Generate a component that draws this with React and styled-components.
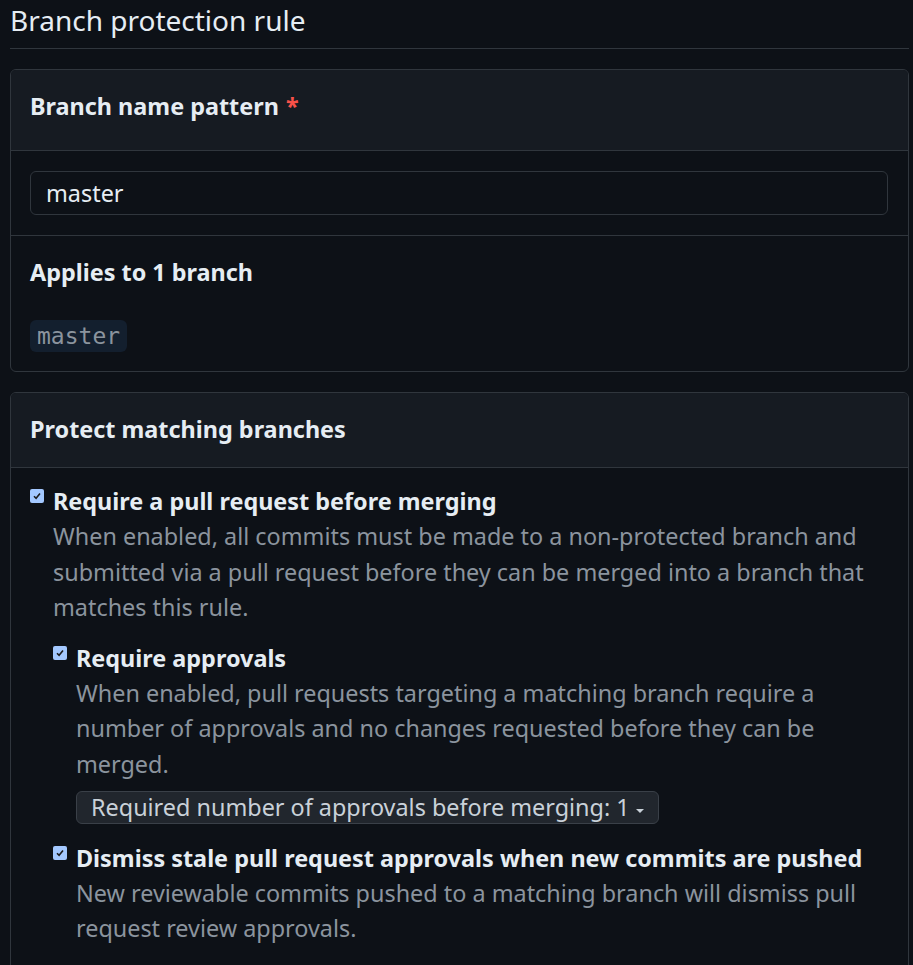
import React from "react";
import styled, { createGlobalStyle } from "styled-components";

const Global = createGlobalStyle`
  html, body { margin: 0; padding: 0; background: #0d1117; }
  body { font-family: "Noto Sans", "Open Sans", sans-serif; color: #e6edf3; }
  * { box-sizing: border-box; }
`;

const FS = "23.4px";

const Page = styled.div`
  padding: 2px 4px 0 10px;
  display: flex;
  flex-direction: column;
  gap: 20px;
`;

const Subhead = styled.div`
  border-bottom: 1px solid #30363d;
  padding-bottom: 10px;
`;

const Title = styled.h2`
  margin: 0;
  font-size: 28px;
  line-height: 36px;
  font-weight: 400;
  color: #e6edf3;
`;

const Box = styled.section`
  border: 1px solid #30363d;
  border-radius: 6px;
  background: #0d1117;
  overflow: hidden;
`;

const BoxHeader = styled.div`
  background: #161b22;
  padding: ${(p) => p.$pad || 19}px 20px ${(p) => p.$padBottom || 19}px 19px;
  border-bottom: 1px solid #30363d;
`;

const BoxTitle = styled.h3`
  margin: 0;
  font-size: ${FS};
  line-height: 36px;
  font-weight: 700;
  color: #e6edf3;
`;

const Required = styled.span`
  color: #f85149;
  margin-left: 7px;
`;

const Row = styled.div`
  padding: ${(p) => p.$top}px 20px ${(p) => p.$bottom}px 19px;
  border-top: ${(p) => (p.$divided ? "1px solid #30363d" : "none")};
`;

const TextInput = styled.div`
  height: 44px;
  border: 1px solid #30363d;
  border-radius: 6px;
  background: #0d1117;
  padding: 0 15px;
  display: flex;
  align-items: center;
  font-size: ${FS};
  color: #e6edf3;
`;

const SubTitle = styled.h4`
  margin: 0;
  font-size: ${FS};
  line-height: 36px;
  font-weight: 700;
  color: #e6edf3;
`;

const Chip = styled.code`
  display: inline-flex;
  align-items: center;
  margin-top: 30px;
  height: 32px;
  padding: 0 7px;
  border-radius: 6px;
  background: #131f2e;
  color: #8b949e;
  font-family: "DejaVu Sans Mono", "Liberation Mono", monospace;
  font-size: 23px;
`;

const Options = styled.div`
  padding: 16px 20px 60px 19px;
`;

const Option = styled.div`
  display: grid;
  grid-template-columns: 14px 1fr;
  column-gap: 9px;
  margin-top: ${(p) => p.$mt || 0}px;
`;

const Check = styled.span`
  width: 14px;
  height: 14px;
  margin-top: 5px;
  border-radius: 2px;
  background: #a3c8ff;
  display: flex;
  align-items: center;
  justify-content: center;
`;

const OptionBody = styled.div`
  display: flex;
  flex-direction: column;
`;

const Label = styled.div`
  font-size: ${FS};
  line-height: 35px;
  font-weight: 700;
  color: #e6edf3;
`;

const Note = styled.p`
  margin: 0;
  font-size: ${FS};
  line-height: 35.6px;
  color: #8b949e;
`;

const Nested = styled.div`
  display: flex;
  flex-direction: column;
`;

const SelectButton = styled.button`
  align-self: flex-start;
  margin-top: 8px;
  height: 33px;
  padding: 0 14px;
  border: 1px solid #3a4048;
  border-radius: 6px;
  background: #21262d;
  color: #c9d1d9;
  font-family: inherit;
  font-size: ${FS};
  display: inline-flex;
  align-items: center;
  gap: 6px;
`;

const Caret = styled.span`
  width: 0;
  height: 0;
  border-left: 4px solid transparent;
  border-right: 4px solid transparent;
  border-top: 4px solid #c9d1d9;
  margin-top: 8px;
`;

const CheckBox = () => (
  <Check>
    <svg width="10" height="10" viewBox="0 0 10 10">
      <path d="M2 5.2 L4.1 7.3 L8 2.6" fill="none" stroke="#1c1c1c" strokeWidth="1.6" />
    </svg>
  </Check>
);

const OptionItem = ({ label, note, mt, children }) => (
  <Option $mt={mt}>
    <CheckBox />
    <OptionBody>
      <Label>{label}</Label>
      <Note>{note}</Note>
      {children}
    </OptionBody>
  </Option>
);

export default function App() {
  return (
    <>
      <Global />
      <Page>
        <Subhead>
          <Title>Branch protection rule</Title>
        </Subhead>

        <Box>
          <BoxHeader $pad={18} $padBottom={26}>
            <BoxTitle>
              Branch name pattern<Required>*</Required>
            </BoxTitle>
          </BoxHeader>
          <Row $top={20} $bottom={20}>
            <TextInput>master</TextInput>
          </Row>
          <Row $divided $top={18} $bottom={19}>
            <SubTitle>Applies to 1 branch</SubTitle>
            <Chip>master</Chip>
          </Row>
        </Box>

        <Box>
          <BoxHeader $pad={18} $padBottom={20}>
            <BoxTitle>Protect matching branches</BoxTitle>
          </BoxHeader>
          <Options>
            <OptionItem
              label="Require a pull request before merging"
              note="When enabled, all commits must be made to a non-protected branch and submitted via a pull request before they can be merged into a branch that matches this rule."
            >
              <Nested>
                <OptionItem
                  mt={15}
                  label="Require approvals"
                  note="When enabled, pull requests targeting a matching branch require a number of approvals and no changes requested before they can be merged."
                >
                  <SelectButton>
                    Required number of approvals before merging: 1
                    <Caret />
                  </SelectButton>
                </OptionItem>
                <OptionItem
                  mt={17}
                  label="Dismiss stale pull request approvals when new commits are pushed"
                  note="New reviewable commits pushed to a matching branch will dismiss pull request review approvals."
                />
              </Nested>
            </OptionItem>
          </Options>
        </Box>
      </Page>
    </>
  );
}
